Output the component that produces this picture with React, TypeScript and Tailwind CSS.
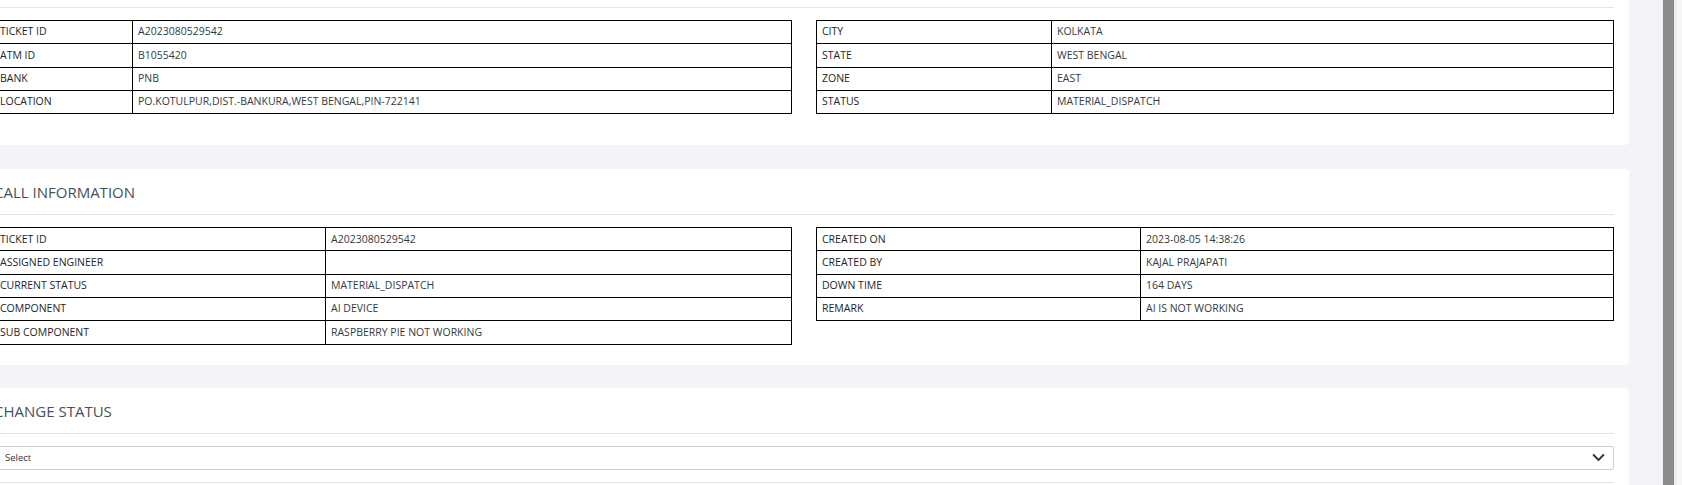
import React from 'react';

type Row = [string, string];

const ticketLeft: Row[] = [
  ['TICKET ID', 'A2023080529542'],
  ['ATM ID', 'B1055420'],
  ['BANK', 'PNB'],
  ['LOCATION', 'PO.KOTULPUR,DIST.-BANKURA,WEST BENGAL,PIN-722141'],
];

const ticketRight: Row[] = [
  ['CITY', 'KOLKATA'],
  ['STATE', 'WEST BENGAL'],
  ['ZONE', 'EAST'],
  ['STATUS', 'MATERIAL_DISPATCH'],
];

const callLeft: Row[] = [
  ['TICKET ID', 'A2023080529542'],
  ['ASSIGNED ENGINEER', ''],
  ['CURRENT STATUS', 'MATERIAL_DISPATCH'],
  ['COMPONENT', 'AI DEVICE'],
  ['SUB COMPONENT', 'RASPBERRY PIE NOT WORKING'],
];

const callRight: Row[] = [
  ['CREATED ON', '2023-08-05 14:38:26'],
  ['CREATED BY', 'KAJAL PRAJAPATI'],
  ['DOWN TIME', '164 DAYS'],
  ['REMARK', 'AI IS NOT WORKING'],
];

const InfoTable: React.FC<{ rows: Row[]; labelWidth: number }> = ({ rows, labelWidth }) => (
  <table className="w-full table-fixed border-collapse text-[10.5px] leading-none">
    <colgroup>
      <col style={{ width: labelWidth }} />
      <col />
    </colgroup>
    <tbody>
      {rows.map(([label, value]) => (
        <tr key={label} className="h-[23.3px]">
          <td className="border border-black px-[5px] pb-[1px] font-medium text-[#212529] whitespace-nowrap">{label}</td>
          <td className="border border-black px-[5px] pb-[1px] text-[#343a40] whitespace-nowrap">{value}</td>
        </tr>
      ))}
    </tbody>
  </table>
);

const Card: React.FC<{ title: string; className?: string; children: React.ReactNode }> = ({ title, className, children }) => (
  <div className={`bg-white rounded-[4px] px-[15px] pt-[14px] ${className ?? ''}`}>
    <h4 className="h-[20px] text-[15px] leading-[19px] text-[#495057] font-normal">{title}</h4>
    <div className="mt-[11px] border-t border-[#e4e5e7]" />
    <div className="pt-[12px]">{children}</div>
  </div>
);

const App: React.FC = () => {
  return (
    <div className="flex h-[485px] w-[1682px] overflow-hidden font-['Open_Sans','Liberation_Sans',sans-serif]">
      <div className="flex-1 bg-[#f3f4f8] overflow-hidden">
        <div className="-mt-[38px] -ml-[21px] mr-[34px] flex flex-col">
          <Card title="TICKET INFORMATION" className="pb-[31px]">
            <div className="grid grid-cols-2 gap-[24px]">
              <InfoTable rows={ticketLeft} labelWidth={138} />
              <InfoTable rows={ticketRight} labelWidth={235} />
            </div>
          </Card>

          <Card title="CALL INFORMATION" className="mt-[24px] pb-[20px]">
            <div className="grid grid-cols-2 gap-[24px] items-start">
              <InfoTable rows={callLeft} labelWidth={331} />
              <InfoTable rows={callRight} labelWidth={324} />
            </div>
          </Card>

          <Card title="CHANGE STATUS" className="mt-[23px] pb-[20px]">
            <div className="flex h-[24px] items-center justify-between rounded-[2px] border border-[#cfcfcf] pl-[10px] pr-[8px]">
              <span className="text-[9.5px] text-[#333]">Select</span>
              <svg width="13" height="13" viewBox="0 0 16 16" fill="none">
                <path d="m2 5 6 6 6-6" stroke="#343a40" strokeWidth="2.4" strokeLinecap="round" strokeLinejoin="round" />
              </svg>
            </div>
            <div className="mt-[12px] border-t border-[#e4e5e7]" />
            <div className="h-[40px]" />
          </Card>
        </div>
      </div>
      <div className="flex w-[19px] bg-[#f6f6f6]">
        <div className="w-[11px] bg-[#8b8b8b]" />
        <div className="w-[3px] bg-[#ececec]" />
      </div>
    </div>
  );
};

export default App;
